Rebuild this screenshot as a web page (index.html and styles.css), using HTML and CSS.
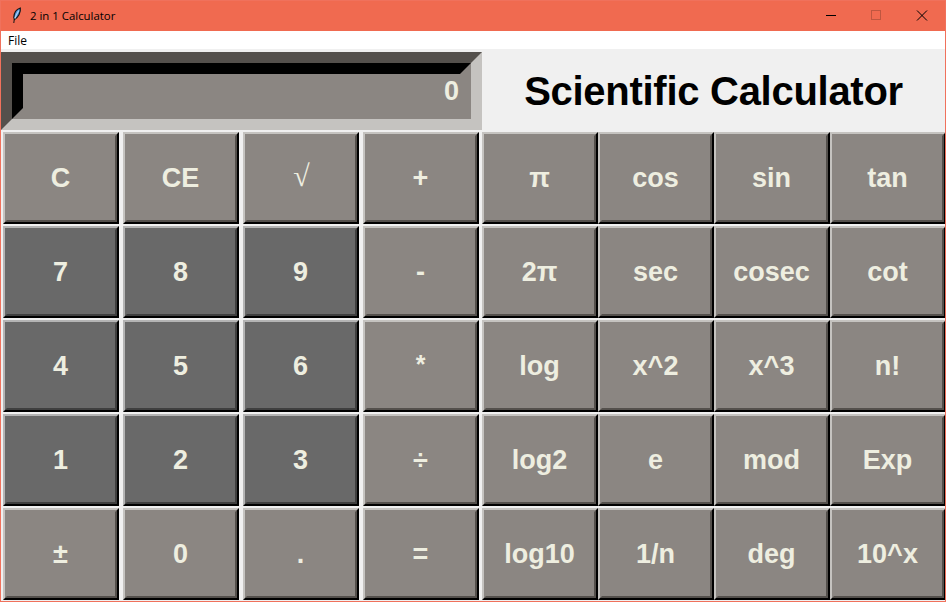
FILE: index.html
```html
<!DOCTYPE html>
<html lang="en">
<head>
<meta charset="utf-8">
<title>2 in 1 Calculator</title>
<link rel="stylesheet" href="styles.css">
</head>
<body>
<div class="window">
  <header class="titlebar">
    <svg class="feather" width="12" height="18" viewBox="0 0 12 18">
      <path d="M10.300 2 C7 3 4 6.500 3.800 11.500 L4.500 13.500 C8 11.500 11 6.500 10.300 2Z" fill="#4e8fd6" stroke="#151515" stroke-width="1.200"/>
      <path d="M8.800 4.500 C7 7.500 5.600 10 4.800 12.500" stroke="#a9d2f5" stroke-width="1.300" fill="none"/>
      <path d="M4.300 13 L3.800 17" stroke="#151515" stroke-width="1"/>
    </svg>
    <span class="caption">2 in 1 Calculator</span>
    <svg class="controls" width="119" height="30" viewBox="0 0 119 30" shape-rendering="crispEdges" fill="none">
      <path d="M0 14.500H10" stroke="#000"/>
      <path d="M45.500 9.500h9v9h-9z" stroke="#bf5640"/>
      <path d="M91 9.500L101 19.500M101 9.500L91 19.500" stroke="#000" stroke-width="1" shape-rendering="auto"/>
    </svg>
  </header>
  <nav class="menubar"><span class="menu">File</span></nav>
  <main class="body">
    <section class="top">
      <div class="display"><div class="value">0</div></div>
      <h1 class="heading">Scientific Calculator</h1>
    </section>
    <section class="keys">
      <div class="pad basic">
        <button class="key">C</button><button class="key">CE</button><button class="key root">√</button><button class="key">+</button>
        <button class="key num">7</button><button class="key num">8</button><button class="key num">9</button><button class="key">-</button>
        <button class="key num">4</button><button class="key num">5</button><button class="key num">6</button><button class="key star">*</button>
        <button class="key num">1</button><button class="key num">2</button><button class="key num">3</button><button class="key">÷</button>
        <button class="key">±</button><button class="key">0</button><button class="key">.</button><button class="key">=</button>
      </div>
      <div class="pad sci">
        <button class="key">π</button><button class="key">cos</button><button class="key">sin</button><button class="key">tan</button>
        <button class="key">2π</button><button class="key">sec</button><button class="key">cosec</button><button class="key">cot</button>
        <button class="key">log</button><button class="key">x^2</button><button class="key">x^3</button><button class="key">n!</button>
        <button class="key">log2</button><button class="key">e</button><button class="key">mod</button><button class="key">Exp</button>
        <button class="key">log10</button><button class="key">1/n</button><button class="key">deg</button><button class="key">10^x</button>
      </div>
    </section>
  </main>
</div>
</body>
</html>
```
FILE: styles.css
```css
* { box-sizing: border-box; }
body { margin: 0; overflow: hidden; }
.window {
  width: 946px;
  height: 602px;
  border: 1px solid #f0715c;
  background: #f0f0f0;
  display: flex;
  flex-direction: column;
  overflow: hidden;
}
.titlebar {
  height: 30px;
  flex: none;
  background: #f06a50;
  display: flex;
  align-items: center;
  padding-left: 9px;
}
.feather { margin-top: -2px; }
.caption {
  margin: -2px 0 0 8px;
  font: 11.4px "Open Sans", sans-serif;
  color: #000;
}
.controls { margin-left: auto; }
.menubar {
  height: 18px;
  flex: none;
  background: #fff;
  padding-left: 7px;
  font: 12px/19px "Open Sans", sans-serif;
}
.body { padding-top: 3px; }
.top { display: flex; height: 78px; }
.display {
  width: 481px;
  height: 78px;
  border: 11px solid;
  border-color: #54504c #c5c3c0 #c5c3c0 #54504c;
  background: #8b8682;
}
.value {
  height: 56px;
  border: 11px solid;
  border-color: #000 #8b8682 #8b8682 #000;
  padding-right: 1px;
  text-align: right;
  color: #eeeee0;
  font: bold 27px/34px "Liberation Sans", Arial, sans-serif;
}
.heading {
  flex: 1;
  margin: 0;
  text-align: center;
  font: bold 40px/78px "Liberation Sans", Arial, sans-serif;
  letter-spacing: -0.28px;
  color: #000;
}
.keys { display: flex; padding-top: 2px; }
.pad { display: grid; grid-auto-rows: 92px; row-gap: 2px; flex: none; }
.basic { grid-template-columns: repeat(4, 116px); column-gap: 4px; padding: 0 3px 0 2px; }
.sci { grid-template-columns: repeat(4, 116px); }
.key {
  position: relative;
  margin: 0;
  padding: 0 1px 0 0;
  border: 2px solid;
  border-color: #c5c3c0 #000 #000 #c5c3c0;
  border-radius: 0;
  background: #8b8682;
  color: #eeeee0;
  font: bold 27px/88px "Liberation Sans", Arial, sans-serif;
}
.key::before {
  content: "";
  position: absolute;
  inset: 0;
  border: 2px solid;
  border-color: transparent #54504c #54504c transparent;
}
.num { background: #696969; border-color: #b4b4b4 #000 #000 #b4b4b4; }
.num::before { border-color: transparent #3f3f3f #3f3f3f transparent; }
.root { font: 30px/80px "Liberation Serif", serif; padding: 0 0 4px 1px; }
.star { font-size: 25px; line-height: 80px; padding-bottom: 4px; }
```
